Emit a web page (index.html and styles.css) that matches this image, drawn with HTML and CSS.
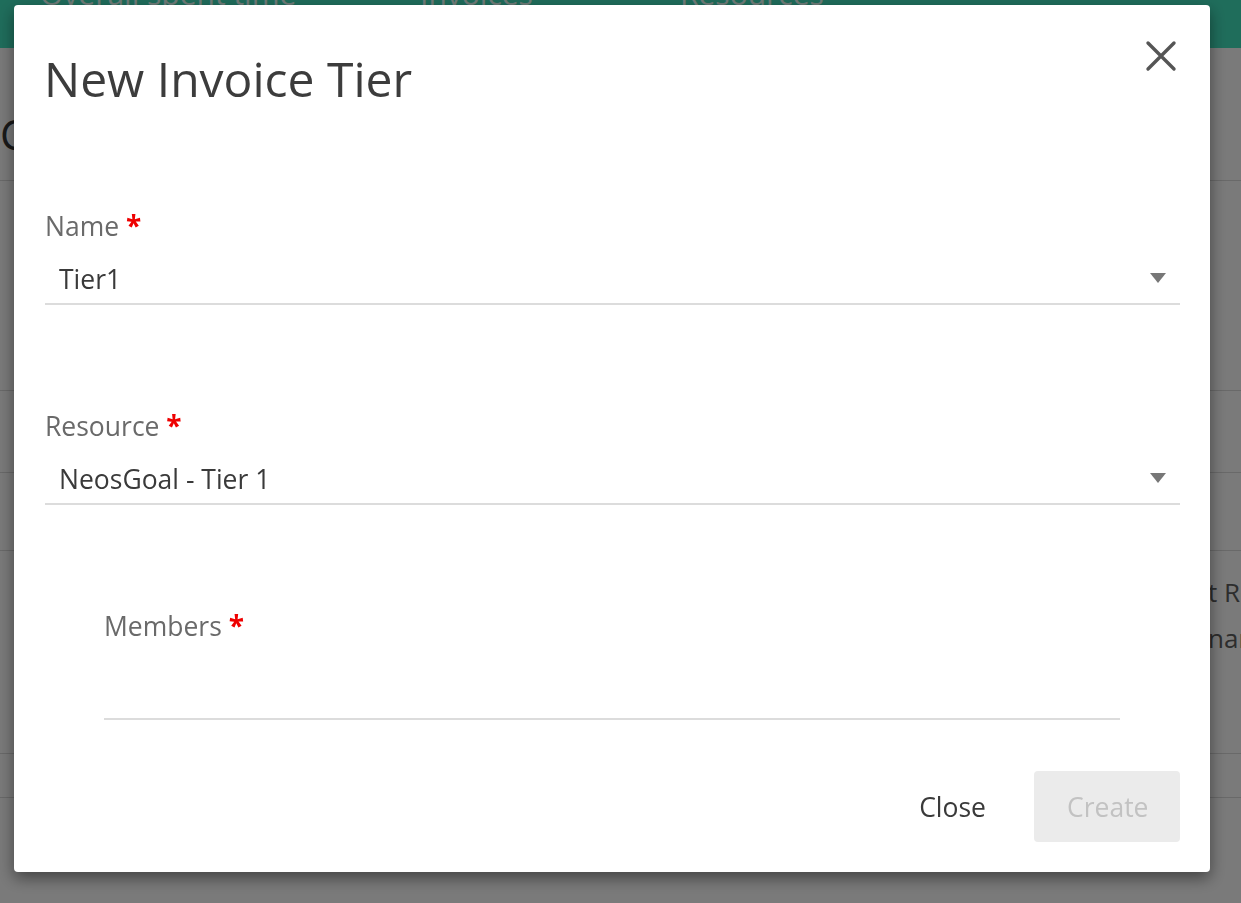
FILE: index.html
```html
<!DOCTYPE html>
<html lang="en">

<head>
  <meta charset="UTF-8">
  <meta name="viewport" content="width=device-width, initial-scale=1.0">
  <title>New Invoice Tier</title>
  <link rel="stylesheet" href="styles.css">
</head>

<body>

  <div class="page">
    <header class="topbar">
      <nav class="tabs">
        <a class="tab">Overall spent time</a>
        <a class="tab">Invoices</a>
        <a class="tab">Resources</a>
      </nav>
    </header>

    <div class="page-head">
      <h2 class="page-title">Clients</h2>
    </div>
    <div class="row row-a"></div>
    <div class="row row-b"></div>
    <div class="row row-c"></div>
    <div class="row row-d">
      <p class="cell-note">t Report</p>
      <p class="cell-note">name</p>
    </div>
    <div class="row row-e"></div>
  </div>

  <!-- modal -->
  <div class="backdrop"></div>
  <div class="modal">
    <div class="modal-header">
      <h1 class="modal-title">New Invoice Tier</h1>
      <button class="close-x" aria-label="Close">
        <svg width="32" height="32" viewBox="0 0 32 32">
          <path d="M3 3 L29 29 M29 3 L3 29" stroke="#555" stroke-width="3.4" stroke-linecap="round" fill="none" />
        </svg>
      </button>
    </div>

    <div class="modal-body">
      <div class="field">
        <label class="field-label">Name <span class="req">*</span></label>
        <div class="select">
          <span class="select-value">Tier1</span>
          <span class="caret"></span>
        </div>
      </div>

      <div class="field">
        <label class="field-label">Resource <span class="req">*</span></label>
        <div class="select">
          <span class="select-value">NeosGoal - Tier 1</span>
          <span class="caret"></span>
        </div>
      </div>

      <div class="field members">
        <label class="field-label">Members <span class="req">*</span></label>
        <div class="chips-input"></div>
      </div>
    </div>

    <div class="modal-footer">
      <button class="btn btn-text">Close</button>
      <button class="btn btn-disabled" disabled>Create</button>
    </div>
  </div>

</body>

</html>
```

FILE: styles.css
```css
* {
  margin: 0;
  padding: 0;
  box-sizing: border-box;
}

body {
  overflow: hidden;
  font-family: "Open Sans", "Noto Sans", sans-serif;
  background: #f4f4f4;
  height: 903px;
}

/* --------底層頁面---------*/
.page {
  width: 100%;
  overflow: hidden;
}

.topbar {
  height: 48px;
  background: #3fdab7;
  overflow: hidden;
}

.tabs {
  display: flex;
  padding-left: 40px;
  margin-top: -24px;
}

.tab {
  font-size: 30px;
  line-height: 36px;
  color: rgba(255, 255, 255, 0.85);
  white-space: nowrap;
}

.tab:nth-child(1) {
  width: 380px;
}

.tab:nth-child(2) {
  width: 260px;
}

.page-head {
  padding: 61px 0 21px 0;
  border-bottom: 1px solid #d2d2d2;
}

.page-title {
  font-size: 42px;
  line-height: 50px;
  font-weight: 400;
  color: #333;
}

.row {
  border-bottom: 1px solid #d2d2d2;
}

.row-a {
  height: 210px;
}

.row-b {
  height: 82px;
}

.row-c {
  height: 78px;
}

.row-d {
  height: 203px;
  padding-top: 18px;
  padding-left: 1208px;
  overflow: hidden;
}

.row-e {
  height: 44px;
}

.cell-note {
  font-size: 26px;
  line-height: 46px;
  color: #5a5a5a;
  white-space: nowrap;
}

.backdrop {
  position: fixed;
  inset: 0;
  background: rgba(0, 0, 0, 0.5);
}

/* --------對話框---------*/
.modal {
  position: fixed;
  top: 5px;
  left: 14px;
  width: 1196px;
  background: #fff;
  border-radius: 4px;
  box-shadow: 0 6px 16px rgba(0, 0, 0, 0.45);
}

.modal-header {
  display: flex;
  justify-content: space-between;
  align-items: flex-start;
  padding: 45px 33px 0 30px;
}

.modal-title {
  font-size: 48px;
  line-height: 58px;
  font-weight: 400;
  color: #3c3c3c;
}

.close-x {
  margin-top: -10px;
  border: none;
  background: none;
  cursor: pointer;
  display: flex;
}

.modal-body {
  padding: 102px 30px 0 31px;
}

.field + .field {
  margin-top: 105px;
}

.field-label {
  display: block;
  font-size: 26.5px;
  line-height: 32px;
  color: #6a6a6a;
}

.req {
  font-size: 28px;
  font-weight: 700;
  color: #ee0000;
  line-height: 0;
}

.select {
  display: flex;
  justify-content: space-between;
  align-items: center;
  margin-top: 21px;
  padding: 0 14px 8px 14px;
  border-bottom: 2px solid #dcdcdc;
}

.select-value {
  font-size: 26.5px;
  line-height: 32px;
  color: #3a3a3a;
}

.caret {
  width: 0;
  height: 0;
  border-left: 8px solid transparent;
  border-right: 8px solid transparent;
  border-top: 10px solid #777;
  margin-top: -2px;
}

.members {
  margin-left: 59px;
  margin-right: 60px;
}

.chips-input {
  height: 78px;
  border-bottom: 2px solid #dcdcdc;
}

.modal-footer {
  display: flex;
  justify-content: flex-end;
  gap: 15px;
  padding: 51px 30px 30px 0;
}

.btn {
  height: 71px;
  padding: 0 33px;
  border: none;
  border-radius: 4px;
  font-family: "Open Sans", "Noto Sans", sans-serif;
  font-size: 26.5px;
  background: transparent;
  cursor: pointer;
}

.btn-text {
  color: #3a3a3a;
}

.btn-disabled {
  width: 146px;
  background: #ebebeb;
  color: #c2c2c2;
  cursor: default;
}
```
